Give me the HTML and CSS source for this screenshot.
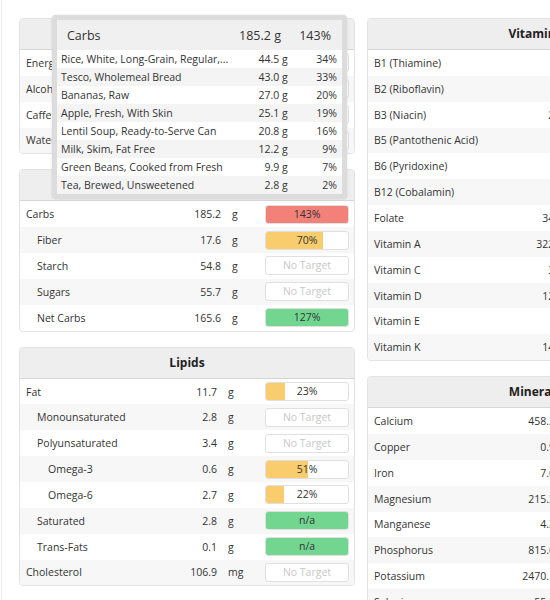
FILE: index.html
```html
<!DOCTYPE html>
<html>
<head>
	<meta charset="utf-8">
	<title>Nutrition Targets</title>
	<link rel="stylesheet" href="styles.css">
</head>
<body>
	<div class="page">
		<div class="col">
			<div class="card">
				<div class="card-head">General</div>
				<table class="nt nt-general">
					<colgroup><col><col class="c-val"><col class="c-unit"><col class="c-bar"></colgroup>
					<tr><td class="name">Energy</td><td class="val">1620.4</td><td class="unit">kcal</td><td class="bar-cell"><div class="bar"><div class="fill yellow" style="width:81%"></div><span class="lbl">81%</span></div></td></tr>
					<tr><td class="name">Alcohol</td><td class="val">0.0</td><td class="unit">g</td><td class="bar-cell"><div class="bar"><span class="lbl none">No Target</span></div></td></tr>
					<tr><td class="name">Caffeine</td><td class="val">47.5</td><td class="unit">mg</td><td class="bar-cell"><div class="bar"><span class="lbl none">No Target</span></div></td></tr>
					<tr><td class="name">Water</td><td class="val">2140.6</td><td class="unit">g</td><td class="bar-cell"><div class="bar"><div class="fill yellow" style="width:58%"></div><span class="lbl">58%</span></div></td></tr>
				</table>
			</div>

			<div class="card">
				<div class="card-head">Carbohydrates</div>
				<table class="nt nt-carbs">
					<colgroup><col><col class="c-val"><col class="c-unit"><col class="c-bar"></colgroup>
					<tr><td class="name">Carbs</td><td class="val">185.2</td><td class="unit">g</td><td class="bar-cell"><div class="bar"><div class="fill red" style="width:100%"></div><span class="lbl">143%</span></div></td></tr>
					<tr><td class="name sub">Fiber</td><td class="val">17.6</td><td class="unit">g</td><td class="bar-cell"><div class="bar"><div class="fill yellow" style="width:70%"></div><span class="lbl">70%</span></div></td></tr>
					<tr><td class="name sub">Starch</td><td class="val">54.8</td><td class="unit">g</td><td class="bar-cell"><div class="bar"><span class="lbl none">No Target</span></div></td></tr>
					<tr><td class="name sub">Sugars</td><td class="val">55.7</td><td class="unit">g</td><td class="bar-cell"><div class="bar"><span class="lbl none">No Target</span></div></td></tr>
					<tr><td class="name sub">Net Carbs</td><td class="val">165.6</td><td class="unit">g</td><td class="bar-cell"><div class="bar"><div class="fill green" style="width:100%"></div><span class="lbl">127%</span></div></td></tr>
				</table>
			</div>

			<div class="card">
				<div class="card-head">Lipids</div>
				<table class="nt nt-lipids">
					<colgroup><col><col class="c-val"><col class="c-unit"><col class="c-bar"></colgroup>
					<tr><td class="name">Fat</td><td class="val">11.7</td><td class="unit">g</td><td class="bar-cell"><div class="bar"><div class="fill yellow" style="width:23%"></div><span class="lbl">23%</span></div></td></tr>
					<tr><td class="name sub">Monounsaturated</td><td class="val">2.8</td><td class="unit">g</td><td class="bar-cell"><div class="bar"><span class="lbl none">No Target</span></div></td></tr>
					<tr><td class="name sub">Polyunsaturated</td><td class="val">3.4</td><td class="unit">g</td><td class="bar-cell"><div class="bar"><span class="lbl none">No Target</span></div></td></tr>
					<tr><td class="name subsub">Omega-3</td><td class="val">0.6</td><td class="unit">g</td><td class="bar-cell"><div class="bar"><div class="fill yellow" style="width:51%"></div><span class="lbl">51%</span></div></td></tr>
					<tr><td class="name subsub">Omega-6</td><td class="val">2.7</td><td class="unit">g</td><td class="bar-cell"><div class="bar"><div class="fill yellow" style="width:22%"></div><span class="lbl">22%</span></div></td></tr>
					<tr><td class="name sub">Saturated</td><td class="val">2.8</td><td class="unit">g</td><td class="bar-cell"><div class="bar"><div class="fill green" style="width:100%"></div><span class="lbl">n/a</span></div></td></tr>
					<tr><td class="name sub">Trans-Fats</td><td class="val">0.1</td><td class="unit">g</td><td class="bar-cell"><div class="bar"><div class="fill green" style="width:100%"></div><span class="lbl">n/a</span></div></td></tr>
					<tr><td class="name">Cholesterol</td><td class="val">106.9</td><td class="unit">mg</td><td class="bar-cell"><div class="bar"><span class="lbl none">No Target</span></div></td></tr>
				</table>
			</div>

			<div class="card">
				<div class="card-head">Protein</div>
			</div>
		</div>

		<div class="col">
			<div class="card">
				<div class="card-head">Vitamins</div>
				<table class="nt nt-vit">
					<colgroup><col><col class="c-val"><col class="c-unit"><col class="c-bar"></colgroup>
					<tr><td class="name">B1 (Thiamine)</td><td class="val">1.4</td><td class="unit">mg</td><td class="bar-cell"></td></tr>
					<tr><td class="name">B2 (Riboflavin)</td><td class="val">2.1</td><td class="unit">mg</td><td class="bar-cell"></td></tr>
					<tr><td class="name">B3 (Niacin)</td><td class="val">23.3</td><td class="unit">mg</td><td class="bar-cell"></td></tr>
					<tr><td class="name">B5 (Pantothenic Acid)</td><td class="val">7.2</td><td class="unit">mg</td><td class="bar-cell"></td></tr>
					<tr><td class="name">B6 (Pyridoxine)</td><td class="val">2.6</td><td class="unit">mg</td><td class="bar-cell"></td></tr>
					<tr><td class="name">B12 (Cobalamin)</td><td class="val">3.6</td><td class="unit">µg</td><td class="bar-cell"></td></tr>
					<tr><td class="name">Folate</td><td class="val">345.1</td><td class="unit">µg</td><td class="bar-cell"></td></tr>
					<tr><td class="name">Vitamin A</td><td class="val">3224.9</td><td class="unit">IU</td><td class="bar-cell"></td></tr>
					<tr><td class="name">Vitamin C</td><td class="val">35.6</td><td class="unit">mg</td><td class="bar-cell"></td></tr>
					<tr><td class="name">Vitamin D</td><td class="val">123.1</td><td class="unit">IU</td><td class="bar-cell"></td></tr>
					<tr><td class="name">Vitamin E</td><td class="val">2.7</td><td class="unit">mg</td><td class="bar-cell"></td></tr>
					<tr><td class="name">Vitamin K</td><td class="val">146.2</td><td class="unit">µg</td><td class="bar-cell"></td></tr>
				</table>
			</div>

			<div class="card">
				<div class="card-head">Minerals</div>
				<table class="nt nt-min">
					<colgroup><col><col class="c-val"><col class="c-unit"><col class="c-bar"></colgroup>
					<tr><td class="name">Calcium</td><td class="val">458.3</td><td class="unit">mg</td><td class="bar-cell"></td></tr>
					<tr><td class="name">Copper</td><td class="val">0.9</td><td class="unit">mg</td><td class="bar-cell"></td></tr>
					<tr><td class="name">Iron</td><td class="val">7.6</td><td class="unit">mg</td><td class="bar-cell"></td></tr>
					<tr><td class="name">Magnesium</td><td class="val">215.3</td><td class="unit">mg</td><td class="bar-cell"></td></tr>
					<tr><td class="name">Manganese</td><td class="val">4.3</td><td class="unit">mg</td><td class="bar-cell"></td></tr>
					<tr><td class="name">Phosphorus</td><td class="val">815.6</td><td class="unit">mg</td><td class="bar-cell"></td></tr>
					<tr><td class="name">Potassium</td><td class="val">2470.1</td><td class="unit">mg</td><td class="bar-cell"></td></tr>
					<tr><td class="name">Selenium</td><td class="val">55.2</td><td class="unit">µg</td><td class="bar-cell"></td></tr>
				</table>
			</div>
		</div>
	</div>

	<!-- breakdown popup shown when hovering the Carbs bar -->
	<div class="tip">
		<div class="tip-head">
			<span class="tip-name">Carbs</span>
			<span class="tip-amt">185.2 g</span>
			<span class="tip-pct">143%</span>
		</div>
		<table class="tip-rows">
			<tr><td>Rice, White, Long-Grain, Regular,...</td><td class="amt">44.5 g</td><td class="pct">34%</td></tr>
			<tr><td>Tesco, Wholemeal Bread</td><td class="amt">43.0 g</td><td class="pct">33%</td></tr>
			<tr><td>Bananas, Raw</td><td class="amt">27.0 g</td><td class="pct">20%</td></tr>
			<tr><td>Apple, Fresh, With Skin</td><td class="amt">25.1 g</td><td class="pct">19%</td></tr>
			<tr><td>Lentil Soup, Ready-to-Serve Can</td><td class="amt">20.8 g</td><td class="pct">16%</td></tr>
			<tr><td>Milk, Skim, Fat Free</td><td class="amt">12.2 g</td><td class="pct">9%</td></tr>
			<tr><td>Green Beans, Cooked from Fresh</td><td class="amt">9.9 g</td><td class="pct">7%</td></tr>
			<tr><td>Tea, Brewed, Unsweetened</td><td class="amt">2.8 g</td><td class="pct">2%</td></tr>
		</table>
	</div>
</body>
</html>
```

FILE: styles.css
```css
html, body {
	margin: 0;
	overflow: hidden;
	background: #fff;
}
body {
	font-family: "Open Sans", "Liberation Sans", sans-serif;
	font-size: 10.5px;
	color: #333;
}
.page {
	display: grid;
	grid-template-columns: 336px 336px;
	column-gap: 12px;
	align-items: start;
	margin-left: 1px;
	padding: 18px 0 0 17px;
	border-left: 1px solid #ececec;
	width: 700px;
}
.card {
	border: 1px solid #e3e3e3;
	border-radius: 4px;
	margin-bottom: 15px;
	overflow: hidden;
	background: #fff;
}
.card-head {
	height: 30px;
	line-height: 30px;
	background: #eeeeee;
	border-bottom: 1px solid #d6d6d6;
	text-align: center;
	font-weight: bold;
	font-size: 12px;
	color: #222;
}

/* nutrient tables */
.nt {
	width: 100%;
	border-collapse: collapse;
	table-layout: fixed;
}
.nt tr:nth-child(even) td { background: #f7f7f7; }
.nt td {
	height: 25.85px;
	padding: 0;
	white-space: nowrap;
}
.nt .name { padding-left: 6px; }
.nt .name.sub { padding-left: 17px; }
.nt .name.subsub { padding-left: 28px; }
.nt .val { text-align: right; }
.nt .unit { padding-left: 11px; }
.c-val { width: 50px; }
.c-bar { width: 94px; }
.nt-general .c-unit, .nt-carbs .c-unit { width: 39px; }
.nt-lipids .c-unit { width: 43px; }
.nt-vit .c-unit { width: 39px; }
.nt-min .c-unit { width: 53px; }

.bar-cell { padding: 0 5px !important; }
.bar {
	display: grid;
	height: 19px;
	box-sizing: border-box;
	border: 1px solid #e0e0e0;
	border-radius: 3px;
	background: #fff;
	overflow: hidden;
}
.bar .fill, .bar .lbl { grid-area: 1 / 1; }
.fill { height: 100%; }
.fill.red { background: #f2817a; }
.fill.yellow { background: #f9cd6e; }
.fill.green { background: #72d690; }
.lbl {
	text-align: center;
	line-height: 17px;
	color: #333;
}
.lbl.none { color: #c8c8c8; }

/* hover popup */
.tip {
	position: absolute;
	left: 52px;
	top: 15px;
	width: 295px;
	box-sizing: border-box;
	border: 5px solid #dcdcdc;
	border-radius: 4px;
	background: #fff;
	box-shadow: 0 0 2px rgba(0,0,0,0.15);
}
.tip-head {
	display: flex;
	align-items: center;
	height: 30px;
	padding: 0 11px 0 10px;
	background: #f0f0f0;
	font-size: 12.5px;
}
.tip-name { flex: 1; }
.tip-pct { width: 50px; text-align: right; }
.tip-rows {
	width: 100%;
	border-collapse: collapse;
}
.tip-rows td {
	height: 18px;
	padding: 0;
	white-space: nowrap;
}
.tip-rows tr:nth-child(even) td { background: #f4f4f4; }
.tip-rows td:first-child { padding-left: 4px; }
.tip-rows .amt { text-align: right; width: 60px; }
.tip-rows .pct { text-align: right; width: 50px; padding-right: 5px; }
```
